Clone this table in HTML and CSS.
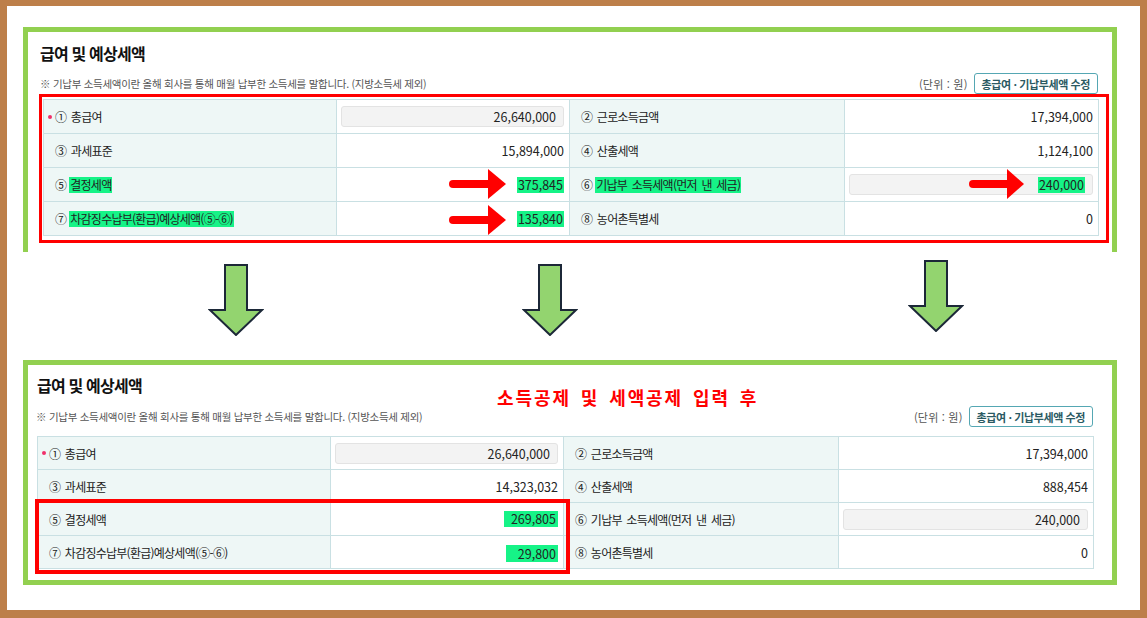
FILE: index.html
```html
<!DOCTYPE html>
<html lang="ko">
<head>
<meta charset="utf-8">
<title>급여 및 예상세액</title>
<link rel="stylesheet" href="styles.css">
</head>
<body>
<div class="frame">
  <section class="panel panel-top">
    <h2 class="title">급여 및 예상세액</h2>
    <div class="note-row">
      <p class="note">※ 기납부 소득세액이란 올해 회사를 통해 매월 납부한 소득세를 말합니다. (지방소득세 제외)</p>
      <div class="unit-wrap"><span class="unit">(단위 : 원)</span><button class="edit-btn">총급여 · 기납부세액 수정</button></div>
    </div>
    <div class="red-box">
      <div class="grid grid-tall">
        <div class="cell label"><span class="req"></span>① 총급여</div>
        <div class="cell value"><div class="input">26,640,000</div></div>
        <div class="cell label">② 근로소득금액</div>
        <div class="cell value">17,394,000</div>

        <div class="cell label">③ 과세표준</div>
        <div class="cell value">15,894,000</div>
        <div class="cell label">④ 산출세액</div>
        <div class="cell value">1,124,100</div>

        <div class="cell label">⑤<span class="gap"></span><span class="hl">결정세액</span></div>
        <div class="cell value">
          <svg class="red-arrow arrow-a" width="58" height="30" viewBox="0 0 58 30"><rect x="1" y="11" width="44" height="8" rx="4" fill="#ff0000"/><polygon points="40,0 58,15 40,30" fill="#ff0000"/></svg>
          <span class="hl">375,845</span>
        </div>
        <div class="cell label">⑥<span class="gap"></span><span class="hl">기납부 소득세액(먼저 낸 세금)</span></div>
        <div class="cell value">
          <div class="input"><span class="hl">240,000</span></div>
          <svg class="red-arrow arrow-c" width="56" height="30" viewBox="0 0 56 30"><rect x="1" y="11" width="42" height="8" rx="4" fill="#ff0000"/><polygon points="39,0 56,15 39,30" fill="#ff0000"/></svg>
        </div>

        <div class="cell label">⑦<span class="gap"></span><span class="hl">차감징수납부(환급)예상세액(⑤-⑥)</span></div>
        <div class="cell value">
          <svg class="red-arrow arrow-b" width="58" height="30" viewBox="0 0 58 30"><rect x="1" y="11" width="44" height="8" rx="4" fill="#ff0000"/><polygon points="40,0 58,15 40,30" fill="#ff0000"/></svg>
          <span class="hl">135,840</span>
        </div>
        <div class="cell label">⑧ 농어촌특별세</div>
        <div class="cell value">0</div>
      </div>
    </div>
  </section>

  <div class="arrows">
    <svg class="down-arrow a1" width="56" height="72" viewBox="0 0 56 72"><path d="M17 1 H39 V46 H54 L28 71 L2 46 H17 Z" fill="#93d46f" stroke="#1c2838" stroke-width="2" stroke-linejoin="miter"/></svg>
    <svg class="down-arrow a2" width="56" height="72" viewBox="0 0 56 72"><path d="M17 1 H39 V46 H54 L28 71 L2 46 H17 Z" fill="#93d46f" stroke="#1c2838" stroke-width="2" stroke-linejoin="miter"/></svg>
    <svg class="down-arrow a3" width="56" height="72" viewBox="0 0 56 72"><path d="M17 1 H39 V46 H54 L28 71 L2 46 H17 Z" fill="#93d46f" stroke="#1c2838" stroke-width="2" stroke-linejoin="miter"/></svg>
  </div>

  <section class="panel panel-bottom">
    <div class="title-row">
      <h2 class="title title-fixed">급여 및 예상세액</h2>
      <p class="after-title">소득공제 및 세액공제 입력 후</p>
    </div>
    <div class="note-row note-row-b">
      <p class="note">※ 기납부 소득세액이란 올해 회사를 통해 매월 납부한 소득세를 말합니다. (지방소득세 제외)</p>
      <div class="unit-wrap"><span class="unit">(단위 : 원)</span><button class="edit-btn">총급여 · 기납부세액 수정</button></div>
    </div>
    <div class="table-wrap">
      <div class="grid grid-short">
        <div class="cell label"><span class="req"></span>① 총급여</div>
        <div class="cell value"><div class="input">26,640,000</div></div>
        <div class="cell label">② 근로소득금액</div>
        <div class="cell value">17,394,000</div>

        <div class="cell label">③ 과세표준</div>
        <div class="cell value">14,323,032</div>
        <div class="cell label">④ 산출세액</div>
        <div class="cell value">888,454</div>

        <div class="cell label">⑤ 결정세액</div>
        <div class="cell value"><span class="hl hl-wide">269,805</span></div>
        <div class="cell label">⑥ 기납부 소득세액(먼저 낸 세금)</div>
        <div class="cell value"><div class="input">240,000</div></div>

        <div class="cell label">⑦ 차감징수납부(환급)예상세액(⑤-⑥)</div>
        <div class="cell value"><span class="hl hl-wider">29,800</span></div>
        <div class="cell label">⑧ 농어촌특별세</div>
        <div class="cell value">0</div>
      </div>
      <div class="red-outline"></div>
    </div>
  </section>
</div>
</body>
</html>
```
FILE: styles.css
```css
* { box-sizing: border-box; }
html, body { margin: 0; }
body {
  background: #bd7f4a;
  padding: 6px 7px 8px;
  font-family: "Noto Sans CJK KR", "Noto Sans", sans-serif;
  color: #222;
}
.frame {
  background: #fff;
  height: 604px;
  padding-top: 21px;
  padding-left: 16px;
}
.panel {
  width: 1094px;
  border: 5px solid #92d050;
  background: #fff;
}
.panel-top {
  border-bottom: none;
  padding: 11px 3px 9px 11px;
}
.title {
  margin: 0;
  font-size: 16px;
  line-height: 20px;
  font-weight: 700;
  letter-spacing: -0.8px;
  color: #111;
  padding-left: 1px;
}
.note-row {
  display: flex;
  justify-content: space-between;
  align-items: center;
  height: 21px;
  margin-top: 10px;
  padding-left: 1px;
  padding-right: 11px;
}
.note {
  margin: 0;
  font-size: 10.5px;
  color: #555;
  letter-spacing: -0.28px;
}
.unit-wrap { display: flex; align-items: center; }
.unit {
  font-size: 11px;
  color: #555;
  margin-right: 6px;
  letter-spacing: 0.2px;
}
.edit-btn {
  height: 21px;
  padding: 0 7px;
  border: 1px solid #55a7b3;
  border-radius: 3px;
  background: #fff;
  font-family: inherit;
  font-size: 11px;
  font-weight: 700;
  letter-spacing: -0.4px;
  color: #2b5a63;
}
.red-box {
  width: 1070px;
  border: 3px solid #ff0000;
  padding: 2px 7px 4px 1px;
}
.grid {
  display: grid;
  grid-template-columns: 293px 233px 275px 1fr;
  border-top: 1px solid #c9e0e3;
  border-left: 1px solid #c9e0e3;
}
.grid-tall { grid-auto-rows: 34px; }
.grid-short { grid-auto-rows: 33px; }
.cell {
  border-right: 1px solid #c9e0e3;
  border-bottom: 1px solid #c9e0e3;
  display: flex;
  align-items: center;
  font-size: 12px;
  position: relative;
  white-space: pre;
}
.label {
  background: #eef7f6;
  padding-left: 11px;
  letter-spacing: -0.75px;
  word-spacing: 2px;
  color: #222;
}
.gap { display: inline-block; width: 3px; }
.value {
  justify-content: flex-end;
  padding-right: 5px;
  font-size: 12.5px;
}
.req {
  display: inline-block;
  width: 4px;
  height: 4px;
  border-radius: 50%;
  background: #f0306a;
  margin-left: -7px;
  margin-right: 3px;
}
.input {
  flex: 1;
  height: 21px;
  margin-left: 4px;
  background: #f3f3f3;
  border: 1px solid #e3e3e3;
  border-radius: 3px;
  display: flex;
  align-items: center;
  justify-content: flex-end;
  padding-right: 7px;
}
.hl {
  display: inline-block;
  line-height: 16px;
  background: #16f387;
  padding: 0 1px;
}
.hl-wide { padding: 0 2px 0 7px; }
.hl-wider { padding: 1px 2px 0 12px; margin-top: 3px; }
.red-arrow { position: absolute; }
.arrow-a { left: 111px; top: 1px; }
.arrow-b { left: 111px; top: 3px; }
.arrow-c { left: 123px; top: 1px; }

.arrows {
  height: 108px;
  display: flex;
  align-items: flex-start;
}
.down-arrow { display: block; }
.a1 { margin-left: 185px; margin-top: 12px; }
.a2 { margin-left: 258px; margin-top: 12px; }
.a3 { margin-left: 330px; margin-top: 8px; }

.panel-bottom {
  padding: 10px 18px 11px 8px;
}
.title-row {
  display: flex;
  align-items: flex-start;
  height: 20px;
}
.title-fixed { width: 461px; flex: none; }
.after-title {
  margin: 10px 0 0;
  font-size: 18px;
  line-height: 24px;
  font-weight: 700;
  color: #ff0000;
  letter-spacing: 1.9px;
  word-spacing: 3px;
  white-space: nowrap;
}
.note-row-b {
  margin-top: 11px;
  padding-left: 0;
  padding-right: 1px;
}
.table-wrap {
  position: relative;
  margin-top: 9px;
  margin-left: 1px;
  width: 1057px;
}
.red-outline {
  position: absolute;
  left: -2px;
  top: 63px;
  width: 535px;
  height: 75px;
  border: 4px solid #ff0000;
}
```
